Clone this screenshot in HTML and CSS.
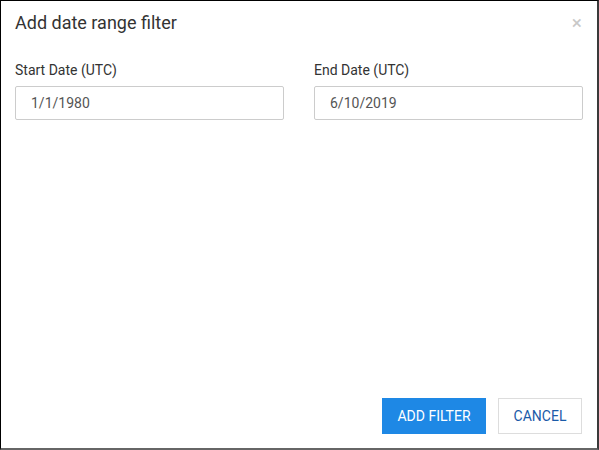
FILE: index.html
```html
<!DOCTYPE html>
<html>
<head>
<meta charset="utf-8">
<link rel="stylesheet" href="styles.css">
</head>
<body>
<div class="dialog">
  <div class="header">
    <h1 class="title">Add date range filter</h1>
    <span class="close">&times;</span>
  </div>
  <div class="fields">
    <div class="field">
      <label class="label">Start Date (UTC)</label>
      <div class="input">1/1/1980</div>
    </div>
    <div class="field">
      <label class="label">End Date (UTC)</label>
      <div class="input">6/10/2019</div>
    </div>
  </div>
  <div class="footer">
    <button class="btn btn-primary">ADD FILTER</button>
    <button class="btn btn-default">CANCEL</button>
  </div>
</div>
</body>
</html>
```

FILE: styles.css
```css
* { box-sizing: border-box; }
html, body { margin: 0; padding: 0; background: #fff; }
body { font-family: Roboto, "Noto Sans", sans-serif; color: #333; }
.dialog {
  width: 599px;
  height: 450px;
  border-top: 1px solid #000;
  border-left: 1px solid #000;
  border-right: 2px solid #3a3a3a;
  border-bottom: 2px solid #666;
  display: flex;
  flex-direction: column;
  padding: 0 15px 0 14px;
}
.header {
  display: flex;
  justify-content: space-between;
  align-items: flex-start;
  height: 61px;
}
.title {
  margin: 11px 0 0 0;
  font-size: 18px;
  font-weight: 400;
  line-height: 22px;
  color: #333;
}
.close {
  margin-top: 12px;
  margin-right: 0;
  font-size: 19px;
  line-height: 20px;
  color: #c8c8c8;
}
.fields {
  display: grid;
  grid-template-columns: 269px 269px;
  column-gap: 30px;
}
.field { display: flex; flex-direction: column; }
.label {
  font-size: 14px;
  line-height: 17px;
  color: #333;
  margin-bottom: 7px;
}
.input {
  height: 34px;
  border: 1px solid #ccc;
  border-radius: 2px;
  padding: 0 15px;
  font-size: 14px;
  line-height: 32px;
  color: #555;
}
.footer {
  margin-top: auto;
  margin-bottom: 14px;
  display: flex;
  justify-content: flex-end;
  gap: 12px;
}
.btn {
  height: 36px;
  font-family: Roboto, "Noto Sans", sans-serif;
  font-size: 14px;
  border-radius: 0;
  padding: 0;
  white-space: nowrap;
  cursor: pointer;
}
.btn-primary {
  background: #1e88e5;
  border: 1px solid #1e88e5;
  color: #fff;
  width: 104px;
}
.btn-default {
  background: #fff;
  border: 1px solid #ddd;
  color: #1a5aa8;
  width: 84px;
}
```
